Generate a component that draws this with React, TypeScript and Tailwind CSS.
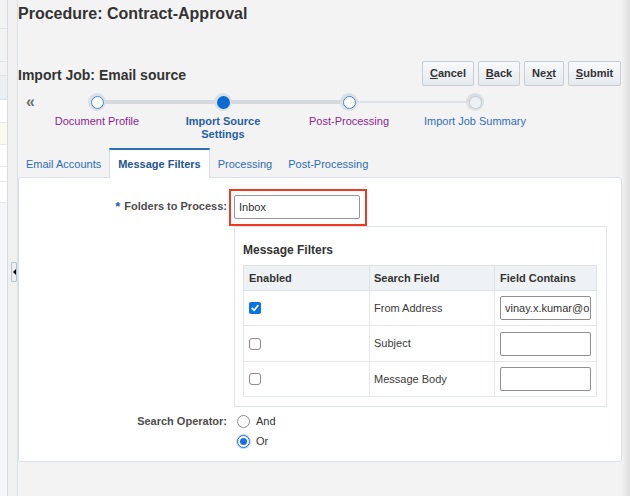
const steps = [
  { label: ["Document Profile"], state: "visited" },
  { label: ["Import Source", "Settings"], state: "current" },
  { label: ["Post-Processing"], state: "visited" },
  { label: ["Import Job Summary"], state: "todo" },
];

const tabs = ["Email Accounts", "Message Filters", "Processing", "Post-Processing"];

const filters = [
  { field: "From Address", enabled: true, value: "vinay.x.kumar@o" },
  { field: "Subject", enabled: false, value: "" },
  { field: "Message Body", enabled: false, value: "" },
];

function LeftPane() {
  return (
    <div className="flex w-[8px] flex-col border-r border-[#d6dce2] bg-[#f4f6fa]">
      <div className="h-[29px] border-b border-[#dde2e7] bg-[#f3f3f3]" />
      <div className="h-[33px] border-b border-[#dde2e7] bg-[#f3f3f3]" />
      <div className="h-[13px] bg-[#f3f3f3]" />
      <div className="h-[25px] border-y border-[#dde2e7] bg-[#eceff2]" />
      <div className="h-[23px] border-b border-[#e6e9ec] bg-white" />
      <div className="h-[22px] border-b border-[#e6e9ec] bg-[#fafaef]" />
      <div className="h-[22px] border-b border-[#e6e9ec] bg-white" />
      <div className="h-[15px] border-b border-[#e6e9ec] bg-white" />
      <div className="h-[21px] border-b border-[#e6e9ec] bg-white" />
    </div>
  );
}

function Splitter() {
  return (
    <div className="flex w-[10px] flex-col border-r border-[#dde2e7] bg-[#f0f0f0]">
      <div className="h-[262px]" />
      <div className="ml-[3px] flex h-[20px] w-[6px] items-center justify-center rounded-[1px] border border-[#b8c1ca] bg-[#eef1f4]">
        <span className="h-0 w-0 border-y-[3px] border-r-[3px] border-y-transparent border-r-black" />
      </div>
    </div>
  );
}

function Button({ children, width }: { children: React.ReactNode; width: string }) {
  return (
    <button
      className={`flex h-[25px] ${width} items-center justify-center rounded-[2px] border border-[#c4ced7] bg-linear-to-b from-[#f8f9fa] to-[#e6eaee] text-[11px] font-bold text-[#333]`}
    >
      {children}
    </button>
  );
}

function StepDot({ state }: { state: string }) {
  return (
    <div className="flex h-[18px] w-[18px] items-center justify-center rounded-full bg-[#dcdfe3]">
      {state === "current" && <div className="h-[13px] w-[13px] rounded-full bg-[#0a6cd2]" />}
      {state === "visited" && (
        <div className="h-[13px] w-[13px] rounded-full border-[1.5px] border-[#3f8ae0] bg-white" />
      )}
      {state === "todo" && (
        <div className="h-[13px] w-[13px] rounded-full border border-[#c4cad1] bg-[#eef1f4]" />
      )}
    </div>
  );
}

function Train() {
  return (
    <div className="relative flex h-[62px] pt-[7px]">
      <div className="absolute left-[79px] top-[14px] h-[4px] w-[251px] bg-[#d6dade]" />
      <div className="absolute left-[330px] top-[15px] h-[2px] w-[127px] bg-[#dfe2e5]" />
      <div className="w-[16px] pl-[8px] text-[16px] leading-[18px] font-bold text-[#707070]">«</div>
      {steps.map((s) => (
        <div key={s.label.join(" ")} className="relative flex w-[126px] flex-col items-center">
          <StepDot state={s.state} />
          <div
            className={`mt-[4px] text-center text-[11px] leading-[13px] ${
              s.state === "visited"
                ? "text-[#8d1f98]"
                : s.state === "current"
                  ? "font-bold text-[#2760a5]"
                  : "text-[#3270b4]"
            }`}
          >
            {s.label.map((l) => (
              <div key={l}>{l}</div>
            ))}
          </div>
        </div>
      ))}
    </div>
  );
}

function Checkbox({ checked }: { checked: boolean }) {
  if (checked)
    return (
      <span className="flex h-[12px] w-[12px] items-center justify-center rounded-[2px] bg-[#0b72e3]">
        <svg width="10" height="10" viewBox="0 0 10 10" fill="none">
          <path d="M2.2 5.3 L4.2 7.3 L7.9 2.6" stroke="white" strokeWidth="1.7" strokeLinecap="round" strokeLinejoin="round" />
        </svg>
      </span>
    );
  return <span className="h-[12px] w-[12px] rounded-[3px] border border-[#8c8c8c] bg-white" />;
}

function Radio({ checked }: { checked: boolean }) {
  if (checked)
    return (
      <span className="flex h-[13px] w-[13px] items-center justify-center rounded-full border border-[#1a70e0] bg-white shadow-[0_0_0_1px_rgba(26,112,224,0.25)]">
        <span className="h-[7px] w-[7px] rounded-full bg-[#1a70e0]" />
      </span>
    );
  return <span className="h-[13px] w-[13px] rounded-full border border-[#8c8c8c] bg-white" />;
}

export default function App() {
  return (
    <div className="flex h-[496px] w-[630px] overflow-hidden bg-[#f3f3f3] font-['Liberation_Sans',Arial,sans-serif] text-[#333]">
      <LeftPane />
      <Splitter />
      <main className="flex w-[604px] flex-col">
        <div className="flex h-[28px] items-center">
          <h1 className="text-[16px] font-bold text-[#333]">Procedure: Contract-Approval</h1>
        </div>

        <div className="mt-[33px] flex h-[25px] items-center justify-between pr-[1px]">
          <h2 className="pt-[3px] text-[14px] font-bold text-[#333]">Import Job: Email source</h2>
          <div className="flex gap-[4px]">
            <Button width="w-[52px]">
              <span><u>C</u>ancel</span>
            </Button>
            <Button width="w-[42px]">
              <span><u>B</u>ack</span>
            </Button>
            <Button width="w-[40px]">
              <span>Ne<u>x</u>t</span>
            </Button>
            <Button width="w-[53px]">
              <span><u>S</u>ubmit</span>
            </Button>
          </div>
        </div>

        <Train />

        <div className="relative z-10 -mb-px flex h-[30px] text-[11px]">
          {tabs.map((t) => {
            const active = t === "Message Filters";
            return (
              <div
                key={t}
                className={`flex items-center px-[8px] pt-[1px] ${
                  active
                    ? "border-x border-t-2 border-x-[#d6dce2] border-t-[#2a6fb8] bg-white font-bold text-[#24558f]"
                    : "border-t-2 border-transparent text-[#2d6db3]"
                }`}
              >
                {t}
              </div>
            );
          })}
        </div>

        <section className="h-[285px] rounded-[3px] border border-[#dbe1e7] bg-white pt-[11px]">
          <div className="grid grid-cols-[210px_1fr]">
            <div className="flex items-center justify-end gap-[4px] pr-[2px] pb-[2px] text-[11px] font-bold text-[#4d4d4d]">
              <span className="text-[13px] text-[#2b63a8]">*</span>
              <span>Folders to Process:</span>
            </div>
            <div>
              <div className="inline-block border-2 border-[#ef3a22] pt-[4px] pr-[5px] pb-[5px] pl-[3px]">
                <div className="flex h-[24px] w-[126px] items-center rounded-[2px] border border-[#979797] pl-[4px] text-[11px] text-[#333]">
                  Inbox
                </div>
              </div>
            </div>

            <div />
            <div className="ml-[5px] h-[181px] w-[373px] border border-[#dfe4e8] bg-white pt-[15px] pl-[8px]">
              <h3 className="mb-[7px] text-[12px] leading-[16px] font-bold text-[#333]">Message Filters</h3>
              <table className="w-[353px] table-fixed border-collapse text-[11px]">
                <colgroup>
                  <col className="w-[126px]" />
                  <col className="w-[125px]" />
                  <col className="w-[102px]" />
                </colgroup>
                <thead>
                  <tr className="h-[25px] bg-[#eff2f5] text-left">
                    <th className="border border-[#dde2e7] pl-[5px] font-bold">Enabled</th>
                    <th className="border border-[#dde2e7] pl-[4px] font-bold">Search Field</th>
                    <th className="border border-[#dde2e7] pl-[5px] font-bold">Field Contains</th>
                  </tr>
                </thead>
                <tbody>
                  {filters.map((f, i) => (
                    <tr key={f.field} className={i === 1 ? "h-[36px]" : "h-[35px]"}>
                      <td className="border border-[#e3e7eb] pl-[5px]">
                        <div className="flex">
                          <Checkbox checked={f.enabled} />
                        </div>
                      </td>
                      <td className="border border-[#e3e7eb] pl-[4px] text-[#3a3a3a]">{f.field}</td>
                      <td className="border border-[#e3e7eb] pl-[5px]">
                        <div className="flex h-[24px] w-[91px] items-center overflow-hidden rounded-[2px] border border-[#8f8f8f] pl-[4px] whitespace-nowrap text-[#333]">
                          {f.value}
                        </div>
                      </td>
                    </tr>
                  ))}
                </tbody>
              </table>
            </div>

            <div className="mt-[4px] flex h-[20px] items-center justify-end pr-[2px] text-[11px] font-bold text-[#4d4d4d]">
              Search Operator:
            </div>
            <div className="mt-[4px] flex flex-col pl-[8px] text-[11px] text-[#333]">
              <label className="flex h-[20px] items-center gap-[6px]">
                <Radio checked={false} />
                And
              </label>
              <label className="flex h-[20px] items-center gap-[6px]">
                <Radio checked />
                Or
              </label>
            </div>
          </div>
        </section>
      </main>
      <div className="w-[8px] bg-linear-to-r from-[#f1f1f1] to-[#e0e0e0]" />
    </div>
  );
}
